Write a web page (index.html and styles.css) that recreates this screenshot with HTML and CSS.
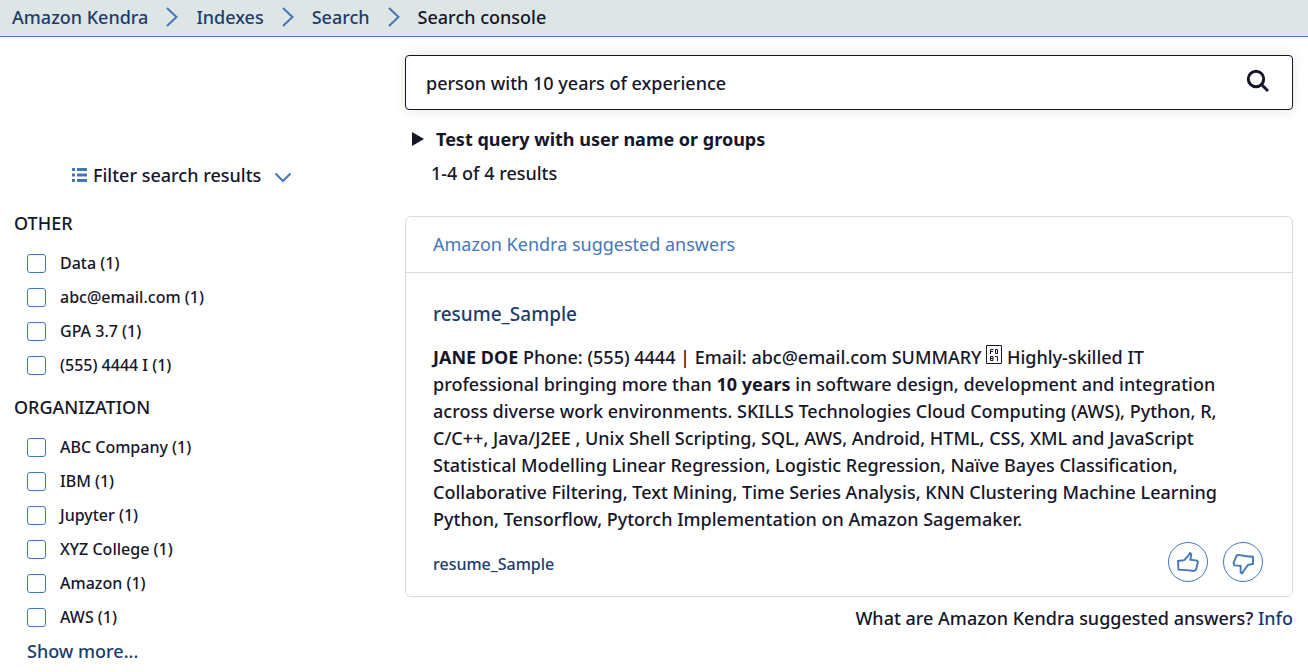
FILE: index.html
```html
<!DOCTYPE html>
<html lang="en">
<head>
<meta charset="utf-8">
<meta name="viewport" content="width=device-width, initial-scale=1">
<title>Amazon Kendra - Search console</title>
<link rel="stylesheet" href="styles.css">
</head>
<body>
<nav class="breadcrumbs" aria-label="Breadcrumbs">
  <a href="#">Amazon Kendra</a>
  <svg class="crumb-arrow" viewBox="0 0 12 20" aria-hidden="true"><path d="M1 1L10.500 10L1 19"/></svg>
  <a href="#">Indexes</a>
  <svg class="crumb-arrow" viewBox="0 0 12 20" aria-hidden="true"><path d="M1 1L10.500 10L1 19"/></svg>
  <a href="#">Search</a>
  <svg class="crumb-arrow" viewBox="0 0 12 20" aria-hidden="true"><path d="M1 1L10.500 10L1 19"/></svg>
  <span class="crumb-current" aria-current="page">Search console</span>
</nav>
<div class="layout">
  <aside class="filters">
    <button class="filter-toggle" type="button">
      <svg class="list-icon" viewBox="0 0 15 14" aria-hidden="true"><path d="M0 1.500H3M5 1.500H15M0 7H3M5 7H15M0 12.500H3M5 12.500H15"/></svg>
      <span>Filter search results</span>
      <svg class="chevron-icon" viewBox="0 0 18 11" aria-hidden="true"><path d="M1.500 1.500L9 9L16.500 1.500"/></svg>
    </button>
    <fieldset class="facet">
      <legend>OTHER</legend>
      <label><input type="checkbox">Data (1)</label>
      <label><input type="checkbox">abc@email.com (1)</label>
      <label><input type="checkbox">GPA 3.7 (1)</label>
      <label><input type="checkbox">(555) 4444 I (1)</label>
    </fieldset>
    <fieldset class="facet">
      <legend>ORGANIZATION</legend>
      <label><input type="checkbox">ABC Company (1)</label>
      <label><input type="checkbox">IBM (1)</label>
      <label><input type="checkbox">Jupyter (1)</label>
      <label><input type="checkbox">XYZ College (1)</label>
      <label><input type="checkbox">Amazon (1)</label>
      <label><input type="checkbox">AWS (1)</label>
    </fieldset>
    <a class="show-more" href="#">Show more...</a>
  </aside>
  <main class="results">
    <form class="search-box" role="search">
      <input class="search-input" type="text" aria-label="Search query" value="person with 10 years of experience">
      <button class="search-button" type="button" aria-label="Search">
        <svg viewBox="0 0 24 24" aria-hidden="true"><circle cx="10" cy="10" r="7.700"/><path d="M15.500 15.500L22 22"/></svg>
      </button>
    </form>
    <button class="test-query" type="button" aria-expanded="false">
      <svg viewBox="0 0 12 14" aria-hidden="true"><path d="M0 0L12 7L0 14Z"/></svg>
      Test query with user name or groups
    </button>
    <p class="count">1-4 of 4 results</p>
    <section class="card">
      <h2 class="card-title">Amazon Kendra suggested answers</h2>
      <div class="card-body">
        <a class="doc-title" href="#">resume_Sample</a>
        <p class="excerpt"><b>JANE DOE</b> Phone: (555) 4444 | Email: abc@email.com SUMMARY <svg class="missing-glyph" viewBox="0 0 16 19" role="img" aria-label="Bullet"><path d="M.5 .5H15.500V18.500H.5ZM4.500 9V4.500H7.500M4.500 6.500H7M9.500 4.500H11.500V8.500H9.500ZM4.500 11.500H7V15.500H4.500ZM4.500 13.500H7M9 11.500H11.500V16"/></svg> Highly-skilled IT<br>professional bringing more than <b>10 years</b> in software design, development and integration<br>across diverse work environments. SKILLS Technologies Cloud Computing (AWS), Python, R,<br>C/C++, Java/J2EE , Unix Shell Scripting, SQL, AWS, Android, HTML, CSS, XML and JavaScript<br>Statistical Modelling Linear Regression, Logistic Regression, Naïve Bayes Classification,<br>Collaborative Filtering, Text Mining, Time Series Analysis, KNN Clustering Machine Learning<br>Python, Tensorflow, Pytorch Implementation on Amazon Sagemaker.</p>
        <div class="card-footer">
          <a class="source" href="#">resume_Sample</a>
          <div class="feedback">
            <button type="button" aria-label="Helpful"><svg viewBox="0 0 40 40" aria-hidden="true"><path d="M9.500 19L16 18L19.500 14.500L22 10.500L23.500 11.500L22.500 17.500L29.500 18.500L30.500 20L28.500 28L26 29.500L18.500 28.500L10 28Z"/></svg></button>
            <button type="button" aria-label="Not helpful"><svg viewBox="0 0 40 40" aria-hidden="true"><path d="M30.500 14.500L24 14L15 12.500L13.500 13L10 21L11 23.500L17.500 24L17.500 31L19 32L23 26L25.500 23L30.500 22Z"/></svg></button>
          </div>
        </div>
      </div>
    </section>
    <p class="help">What are Amazon Kendra suggested answers? <a href="#">Info</a></p>
  </main>
</div>
</body>
</html>
```
FILE: styles.css
```css
* { box-sizing: border-box; }
body {
  margin: 0;
  background: #fff;
  color: #16162a;
  font-family: "Noto Sans", "Open Sans", sans-serif;
  font-size: 18px;
  font-weight: 500;
  line-height: 28px;
}
p, h2 { margin: 0; }
a { color: #1d3c6d; text-decoration: none; }
button { font: inherit; color: inherit; background: none; border: 0; padding: 0; }
svg { fill: none; stroke: #4477b8; stroke-width: 2; }
.breadcrumbs {
  display: flex;
  align-items: center;
  gap: 18px;
  height: 37px;
  padding: 0 12px 2px;
  background: #dde5e5;
  border-bottom: 1px solid #4477b8;
}
.crumb-arrow { width: 12px; height: 20px; }
.layout {
  display: grid;
  grid-template-columns: 377px 1fr;
  gap: 28px;
  padding-right: 15px;
}
.filters { padding: 124px 0 0 14px; }
.filter-toggle { display: flex; align-items: center; gap: 6px; margin-left: 58px; }
.list-icon { width: 15px; height: 14px; stroke-width: 3; }
.chevron-icon { width: 18px; height: 11px; margin: 4px 0 0 7px; }
.facet {
  display: flex;
  flex-direction: column;
  gap: 10px;
  margin: 20px 0 0;
  padding: 0 0 0 13px;
  border: 0;
}
.facet + .facet { margin-top: 16px; }
.facet legend { margin-left: -13px; padding: 0; margin-bottom: 14px; }
.facet label {
  display: flex;
  align-items: center;
  gap: 14px;
  font-size: 16px;
  line-height: 24px;
}
.facet input {
  appearance: none;
  width: 19px;
  height: 19px;
  margin: 0;
  border: 1px solid #4477b8;
  border-radius: 3px;
  background: #fff;
}
.show-more { display: block; margin: 8px 0 0 13px; }
.results { min-width: 0; padding-top: 18px; }
.search-box {
  display: flex;
  align-items: center;
  height: 55px;
  padding: 0 22px 4px 20px;
  border: 1px solid #16162a;
  border-radius: 4px;
  box-shadow: 0 0 14px #e2e6df;
}
.search-input {
  flex: 1;
  min-width: 0;
  padding: 4px 0 0;
  border: 0;
  outline: 0;
  background: none;
  color: inherit;
  font: inherit;
}
.search-button { display: flex; }
.search-button svg { width: 24px; height: 24px; stroke: #16162a; stroke-width: 3; }
.test-query { display: flex; align-items: center; gap: 12px; margin: 15px 0 0 7px; font-weight: 700; }
.test-query svg { width: 12px; height: 14px; fill: #16162a; stroke: none; }
.count { margin: 6px 0 0 26px; }
.card { margin-top: 29px; border: 1px solid #d5dfdf; border-radius: 6px; }
.card-title {
  padding: 13px 27px 14px;
  border-bottom: 1px solid #d5dfdf;
  color: #4477b8;
  font-size: 18px;
  font-weight: 400;
}
.card-body { padding: 27px 27px 14px; }
.doc-title { font-size: 19px; }
.excerpt { margin-top: 16px; line-height: 27px; white-space: nowrap; }
.missing-glyph { width: 16px; height: 19px; stroke: #16162a; stroke-width: 1; }
.card-footer { display: flex; align-items: center; justify-content: space-between; margin-top: 9px; }
.source { font-size: 16px; padding-top: 4px; }
.feedback { display: flex; gap: 15px; padding-right: 2px; }
.feedback button { width: 40px; height: 40px; border: 1px solid #4477b8; border-radius: 50%; }
.feedback svg { display: block; width: 38px; height: 38px; }
.help { margin-top: 7px; text-align: right; }
```
